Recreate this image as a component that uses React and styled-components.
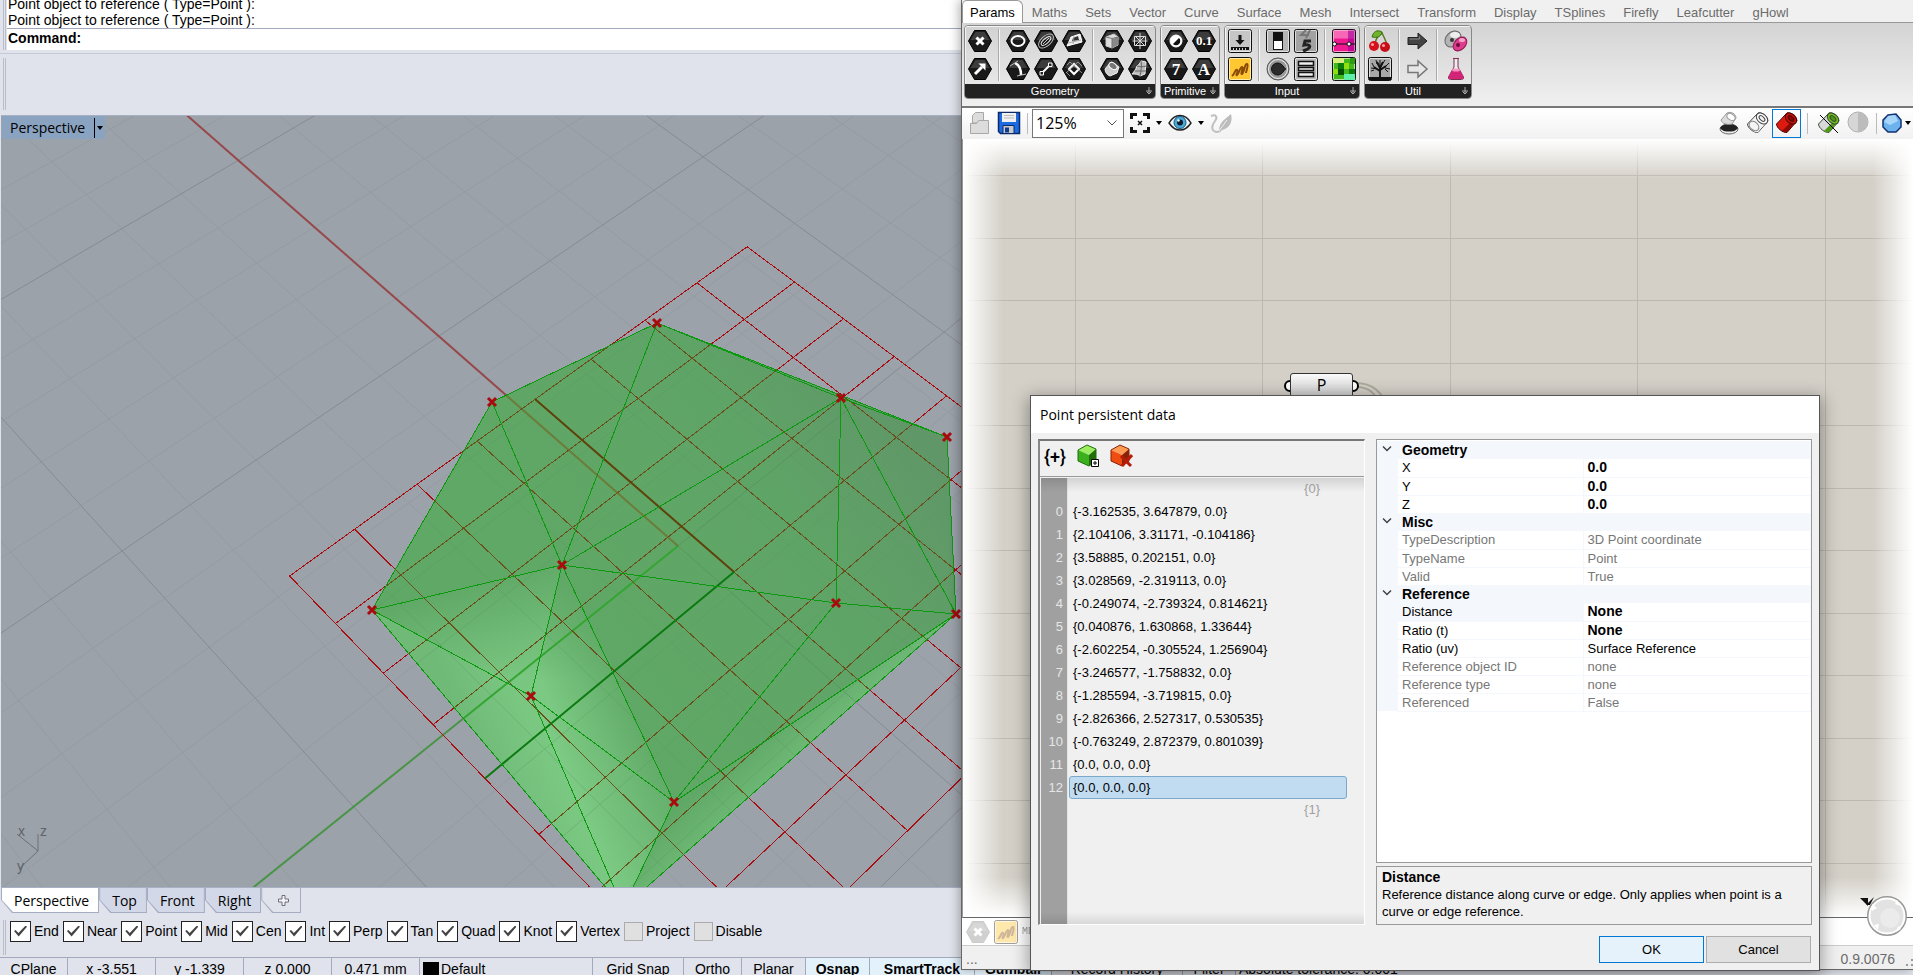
import React, { useState } from "react";
import styled, { createGlobalStyle, css } from "styled-components";

const SANS = `"Liberation Sans", Arial, sans-serif`;
const UI = `"Open Sans", "Noto Sans", sans-serif`;

/* ---------- data ---------- */

const VIEW_TABS = ["Perspective", "Top", "Front", "Right"];

const OSNAPS = [
  ["End", true],
  ["Near", true],
  ["Point", true],
  ["Mid", true],
  ["Cen", true],
  ["Int", true],
  ["Perp", true],
  ["Tan", true],
  ["Quad", true],
  ["Knot", true],
  ["Vertex", true],
  ["Project", false],
  ["Disable", false],
];

const GH_TABS = [
  "Params",
  "Maths",
  "Sets",
  "Vector",
  "Curve",
  "Surface",
  "Mesh",
  "Intersect",
  "Transform",
  "Display",
  "TSplines",
  "Firefly",
  "Leafcutter",
  "gHowl",
];

const POINTS = [
  "{-3.162535, 3.647879, 0.0}",
  "{2.104106, 3.31171, -0.104186}",
  "{3.58885, 0.202151, 0.0}",
  "{3.028569, -2.319113, 0.0}",
  "{-0.249074, -2.739324, 0.814621}",
  "{0.040876, 1.630868, 1.33644}",
  "{-2.602254, -0.305524, 1.256904}",
  "{-3.246577, -1.758832, 0.0}",
  "{-1.285594, -3.719815, 0.0}",
  "{-2.826366, 2.527317, 0.530535}",
  "{-0.763249, 2.872379, 0.801039}",
  "{0.0, 0.0, 0.0}",
  "{0.0, 0.0, 0.0}",
];

const PROPERTIES = [
  {
    title: "Geometry",
    rows: [
      { name: "X", value: "0.0", strong: true },
      { name: "Y", value: "0.0", strong: true },
      { name: "Z", value: "0.0", strong: true },
    ],
  },
  {
    title: "Misc",
    rows: [
      { name: "TypeDescription", value: "3D Point coordinate", muted: true },
      { name: "TypeName", value: "Point", muted: true },
      { name: "Valid", value: "True", muted: true },
    ],
  },
  {
    title: "Reference",
    rows: [
      { name: "Distance", value: "None", strong: true, selected: true },
      { name: "Ratio (t)", value: "None", strong: true },
      { name: "Ratio (uv)", value: "Surface Reference" },
      { name: "Reference object ID", value: "none", muted: true },
      { name: "Reference type", value: "none", muted: true },
      { name: "Referenced", value: "False", muted: true },
    ],
  },
];

/* ---------- viewport scene ---------- */

// ground plane: the two vanishing points and the step towards each
const VU = [3637, -1833, 0.01976];
const VV = [-2040, -1838, 0.0193];

const project = (origin, m, n) => {
  const w = 1 + m * VU[2] + n * VV[2];
  return [0, 1].map((i) =>
    ((origin[i] + m * VU[2] * VU[i] + n * VV[2] * VV[i]) / w).toFixed(1)
  );
};

const line = (origin, m1, n1, m2, n2) =>
  `M${project(origin, m1, n1)}L${project(origin, m2, n2)}`;

const range = (from, to) =>
  Array.from({ length: to - from + 1 }, (_, i) => from + i);

const WORLD = [678, 546];
const LOCAL = [734, 572];

const worldLines = (major) =>
  range(-19, 35)
    .filter((i) => (i % 5 === 0) === major)
    .map((i) => line(WORLD, i, -22, i, 40) + line(WORLD, -22, i, 40, i))
    .join("");

const localLines = range(-4, 4)
  .map((i) => line(LOCAL, i, -4, i, 4) + line(LOCAL, -4, i, 4, i))
  .join("");

const V = {
  a: [657, 323],
  b: [492, 402],
  c: [372, 610],
  d: [947, 437],
  e: [956, 614],
  f: [841, 398],
  g: [562, 565],
  h: [836, 603],
  i: [531, 696],
  j: [674, 802],
  k: [623, 908],
};

const EDGES =
  "ab bc ck ke ed da af fd bg ag fg cg gh he fh fe ci gi gj ij ik jk jh je";

const poly = (keys) => keys.split("").map((k) => V[k].join(",")).join(" ");

const SceneSvg = styled.svg`
  width: 100%;
  height: 100%;
`;

const SceneText = styled.text`
  font-family: ${SANS};
  font-size: 14px;
  fill: #5f636a;
`;

const Scene = () => (
  <SceneSvg viewBox="1 116 1912 771" preserveAspectRatio="xMinYMin slice">
    <defs>
      <linearGradient id="base" gradientUnits="userSpaceOnUse" x1="620" y1="700" x2="960" y2="480">
        <stop offset="0" stopColor="#60a866" />
        <stop offset="0.6" stopColor="#5fa467" />
        <stop offset="1" stopColor="#609668" />
      </linearGradient>
      <linearGradient id="litTop" gradientUnits="userSpaceOnUse" x1="460" y1="585" x2="495" y2="705">
        <stop offset="0" stopColor="#7cca84" stopOpacity="0" />
        <stop offset="0.85" stopColor="#7cca84" stopOpacity="0.9" />
      </linearGradient>
      <linearGradient id="litLeft" gradientUnits="userSpaceOnUse" x1="462" y1="722" x2="553" y2="682">
        <stop offset="0" stopColor="#74be7c" stopOpacity="0.8" />
        <stop offset="0.6" stopColor="#7cca84" stopOpacity="0.9" />
        <stop offset="1" stopColor="#7cca84" stopOpacity="1" />
      </linearGradient>
      <linearGradient id="litRight" gradientUnits="userSpaceOnUse" x1="553" y1="740" x2="655" y2="698">
        <stop offset="0" stopColor="#7cca84" stopOpacity="1" />
        <stop offset="1" stopColor="#7cca84" stopOpacity="0" />
      </linearGradient>
      <linearGradient id="litMid" gradientUnits="userSpaceOnUse" x1="545" y1="690" x2="622" y2="658">
        <stop offset="0" stopColor="#7cca84" stopOpacity="0.95" />
        <stop offset="1" stopColor="#7cca84" stopOpacity="0" />
      </linearGradient>
      <linearGradient id="midFade" gradientUnits="userSpaceOnUse" x1="0" y1="565" x2="0" y2="680">
        <stop offset="0" stopColor="#000" />
        <stop offset="1" stopColor="#fff" />
      </linearGradient>
      <mask id="midMask" maskUnits="userSpaceOnUse" x="300" y="500" width="500" height="500">
        <rect x="300" y="500" width="500" height="500" fill="url(#midFade)" />
      </mask>
      <linearGradient id="litEdge" gradientUnits="userSpaceOnUse" x1="720" y1="770" x2="756" y2="808">
        <stop offset="0" stopColor="#7cca84" stopOpacity="0" />
        <stop offset="1" stopColor="#7cca84" stopOpacity="0.6" />
      </linearGradient>
      <clipPath id="shape">
        <polygon points={poly("abcked")} />
      </clipPath>
    </defs>

    <rect x="0" y="100" width="1913" height="800" fill="#9ca2aa" />
    <path d={worldLines(false)} stroke="#949ba2" fill="none" />
    <path d={worldLines(true)} stroke="#878a93" fill="none" />
    <path d={line(WORLD, 0, 0, 0, 30)} stroke="#96494b" strokeWidth="2" />
    <path d={line(WORLD, 0, 0, -14, 0)} stroke="#4a9448" strokeWidth="2" />
    <path d={localLines} stroke="#a80d12" fill="none" shapeRendering="crispEdges" />

    <polygon points={poly("abcked")} fill="url(#base)" />
    <polygon points={poly("cgi")} fill="url(#litTop)" />
    <polygon points={poly("cik")} fill="url(#litLeft)" />
    <polygon points={poly("gji")} fill="url(#litMid)" mask="url(#midMask)" />
    <polygon points={poly("ijk")} fill="url(#litRight)" />
    <polygon points={poly("jek")} fill="url(#litEdge)" />

    <g clipPath="url(#shape)" fill="none">
      <path d={worldLines(false)} stroke="#5a9a62" strokeOpacity="0.4" />
      <path d={worldLines(true)} stroke="#56875c" strokeOpacity="0.5" />
      <path d={line(WORLD, 0, 0, 0, 30)} stroke="#6c7c3a" strokeWidth="2" />
      <path d={line(WORLD, 0, 0, -14, 0)} stroke="#35a532" strokeWidth="2" />
      <path d={localLines} stroke="#6a501c" shapeRendering="crispEdges" />
    </g>
    <path d={line(LOCAL, 0, 0, 0, 4)} stroke="#5e420a" strokeWidth="2" />
    <path d={line(LOCAL, 0, 0, -4, 0)} stroke="#0b7a10" strokeWidth="2" />
    <path
      d={EDGES.split(" ")
        .map(([p, q]) => `M${V[p]}L${V[q]}`)
        .join("")}
      stroke="#0c980f"
      fill="none"
      shapeRendering="crispEdges"
    />
    {"abcdefghij".split("").map((k) => (
      <path
        key={k}
        d={`M${V[k][0] - 4} ${V[k][1] - 4}l8 8m0 -8l-8 8`}
        stroke="#a80a0e"
        strokeWidth="3"
      />
    ))}

    <path d="M38 834V851L17 834M38 851L20 868" stroke="#6c7077" fill="none" />
    <SceneText x="18" y="836">x</SceneText>
    <SceneText x="40" y="836">z</SceneText>
    <SceneText x="17" y="871">y</SceneText>
  </SceneSvg>
);

/* ---------- icons ---------- */

const HexText = styled.text`
  font-family: "Liberation Serif", serif;
  font-size: ${(props) => props.$size}px;
  font-weight: bold;
  text-anchor: middle;
  fill: #fff;
  stroke: none;
`;

const Hex = ({ children }) => (
  <svg width="24" height="24" viewBox="0 0 24 24" fill="none" stroke="#fff">
    <path d="M.5 12 6.5 1.5h11l6 10.5-6 10.5h-11z" fill="#191919" stroke="#000" />
    <path d="m2.5 11 5-8h9l5 8z" fill="#3c3c3c" stroke="none" />
    {children}
  </svg>
);

const Tile = ({ fill = "#bdbdbd", children }) => (
  <svg width="24" height="24" viewBox="0 0 24 24" fill="none" stroke="#111">
    <rect x=".5" y=".5" width="23" height="23" rx="2" fill={fill} />
    <rect x="1.5" y="1.5" width="21" height="21" rx="1" stroke="#fff" strokeOpacity=".6" />
    {children}
  </svg>
);

const Free = ({ children }) => (
  <svg width="24" height="24" viewBox="0 0 24 24" fill="none">
    {children}
  </svg>
);

const icons = {
  Point: (
    <Hex>
      <path d="m8.5 8.5 7 7m0-7-7 7" strokeWidth="3" />
    </Hex>
  ),
  Vector: (
    <Hex>
      <path d="m7 17 7-7" strokeWidth="3" />
      <path d="M17.5 6.5v7l-7-7z" fill="#fff" stroke="none" />
    </Hex>
  ),
  Circle: (
    <Hex>
      <ellipse cx="12" cy="12" rx="6.5" ry="5" strokeWidth="2" />
    </Hex>
  ),
  Curve: (
    <Hex>
      <ellipse cx="12" cy="12" rx="9" ry="5" transform="rotate(-42 12 12)" stroke="#bbb" />
      <ellipse cx="12" cy="12" rx="6" ry="2.5" transform="rotate(-42 12 12)" stroke="#eee" />
      <path d="m9 15 6-6" stroke="#ccc" />
    </Hex>
  ),
  Plane: (
    <Hex>
      <path d="m5 17 4-9 9-3 2 8z" fill="#eee" />
      <path d="m10 12 1-3 5-2 1 4z" fill="#333" stroke="none" />
      <path d="m6 14 13-3M12 7l-1 8" stroke="#999" strokeWidth=".8" />
    </Hex>
  ),
  Arc: (
    <Hex>
      <path d="M9 6c4 2 6 6 6 12" strokeWidth="2.5" />
      <path d="m4 9 8-5m-1 15 9-2" stroke="#bbb" />
    </Hex>
  ),
  Line: (
    <Hex>
      <path d="m8 16 8-8" strokeWidth="2" />
      <path d="M6 14.5h3.5V18H6zM14.5 6H18v3.5h-3.5z" fill="#222" />
    </Hex>
  ),
  Rectangle: (
    <Hex>
      <path d="m12 7 5 5-5 5-5-5z" strokeWidth="2" />
      <path d="m5 8 3-3 12 11M4 16 16 5l4 4M8 19l-4-4" stroke="#aaa" strokeWidth=".8" />
    </Hex>
  ),
  Box: (
    <Hex>
      <path d="m6 8 8-3 4 3v8l-6 3-6-2z" fill="#ddd" stroke="#ccc" />
      <path d="m12 10 6-2v8l-6 3z" fill="#888" stroke="none" />
      <path d="m6 8 6 1.5L18 8m-6 1.5V19" stroke="#777" />
    </Hex>
  ),
  Mesh: (
    <Hex>
      <path d="M12 4v16M4.500 12h15M7 7l10 10M17 7 7 17M6.500 7.500h11v9h-11z" stroke="#ddd" />
    </Hex>
  ),
  Brep: (
    <Hex>
      <path d="m5 12 6-7 8 5-2 6-7 3c-3-1-5-4-5-7z" fill="#ccc" stroke="#eee" />
      <ellipse cx="13" cy="9" rx="4.5" ry="3" transform="rotate(35 13 9)" fill="#777" stroke="#fff" />
    </Hex>
  ),
  Surface: (
    <Hex>
      <path d="M9 9c2-1 3-3 4-5l5 1-1 12-5 2c-2-2-5-2-8-2 2-2 4-5 5-8z" fill="#bbb" stroke="#eee" />
      <path d="M9 9c3 1 6 1 9 0M7 14h11m-5-10c1 5 0 10-1 15" stroke="#666" />
    </Hex>
  ),
  Boolean: (
    <Hex>
      <circle cx="12" cy="12" r="6" fill="#fff" />
      <path d="M9 15a4.200 4.200 0 0 0 6-6z" fill="#111" stroke="none" />
    </Hex>
  ),
  Number: (
    <Hex>
      <HexText x="12" y="16" $size={13}>0.1</HexText>
    </Hex>
  ),
  Integer: (
    <Hex>
      <HexText x="12" y="18" $size={17}>7</HexText>
    </Hex>
  ),
  Text: (
    <Hex>
      <HexText x="12" y="18" $size={17}>A</HexText>
    </Hex>
  ),
  Gate: (
    <Tile fill="#c6c6c6">
      <path d="M12 6v6" strokeWidth="3" />
      <path d="M7.500 11h9L12 16zM3 18h18v3H3z" fill="#111" stroke="none" />
      <path d="M5.500 21v-2m3 2v-2m3 2v-2m3 2v-2m3 2v-2" stroke="#ccc" />
    </Tile>
  ),
  Panel: (
    <Tile fill="#ffc732">
      <path d="M4 19c3-2 3-7 5-6s-2 6 0 5 3-8 5-8-2 8 0 7 3-11 5-10-1 7-1 9" stroke="#8a4b05" strokeWidth="2" />
    </Tile>
  ),
  Slider: (
    <Tile fill="#b4b4b4">
      <rect x="7.5" y="3.5" width="9" height="17" fill="#fff" />
      <rect x="8" y="4" width="8" height="8" fill="#111" stroke="none" />
    </Tile>
  ),
  Knob: (
    <Free>
      <circle cx="12" cy="12" r="11" fill="#999" stroke="#555" />
      <circle cx="12" cy="12" r="9.5" stroke="#eee" />
      <path d="M20 12c-2 0-3 6-8.500 6a6 6 0 0 1 0-12c5.500 0 6.500 6 8.500 6z" fill="#2c2c2c" stroke="#111" />
    </Free>
  ),
  Scroller: (
    <Tile fill="#a2a2a2">
      <path d="m12 1-5 5h8m1-5-4 8" stroke="#777" strokeWidth="2" />
      <path d="M17 12h-6l-1 4c5-1 7 1 5 3s-4 2-6 3" stroke="#222" strokeWidth="3" />
    </Tile>
  ),
  List: (
    <Tile fill="#b9b9b9">
      <path d="M4.500 4.500h15v4h-15zM4.500 10.500h15v3h-15zM4.500 15.500h15v4h-15z" fill="#eee" strokeWidth="1.5" />
    </Tile>
  ),
  Gradient: (
    <Tile fill="#f01890">
      <path d="M1.500 1.500h21v8h-21z" fill="#ffb4dc" fillOpacity=".5" stroke="none" />
      <path d="M16 1.500h6.500v21H16z" fill="#a1009a" fillOpacity=".6" stroke="none" />
      <path d="M1 15h22" />
      <circle cx="2.5" cy="15" r="2" fill="#fff" />
      <circle cx="17" cy="15" r="2" fill="#fff" />
    </Tile>
  ),
  Image: (
    <Tile fill="#43b81c">
      <g stroke="none">
        <path d="M1 1h11v5H1z" fill="#d6ef7c" />
        <path d="M6 6h6v6H6zM17 12h6v6h-6z" fill="#0a7d0c" />
        <path d="M12 6h5v6h-5zM1 12h5v5H1z" fill="#90e010" />
        <path d="M6 12h6v6H6z" fill="#054e06" />
        <path d="M17 17h6v6h-6zM12 17h5v6h-5z" fill="#5df0a8" />
        <path d="M18 1h5v6h-5z" fill="#2f9c14" />
      </g>
    </Tile>
  ),
  Cherry: (
    <Free>
      <path d="M7 15C8 9 10 6 14 4c2 4 4 8 5 12" stroke="#5a7a20" strokeWidth="1.5" />
      <path d="M14 3C9 0 5 3 4 8c5 1 9 0 10-5z" fill="#6fb52c" stroke="#3c6d12" />
      <circle cx="6" cy="17" r="5" fill="#d5121b" />
      <circle cx="17" cy="18" r="5" fill="#c80f18" />
      <circle cx="4.5" cy="15.5" r="1.5" fill="#ff9d9d" />
      <circle cx="15.5" cy="16.5" r="1.5" fill="#ff9d9d" />
    </Free>
  ),
  Tree: (
    <Tile fill="#a8a8a8">
      <path d="M12 21V11m0 3L6 10m6 3 6-4m-6 2-3-6m3 6 3-6" strokeWidth="2" />
      <path d="m9 12-6-1m3-1L4 6m5 1L8 3m4 6V3m3 3 2-3m1 6 3-3m-4 5 5 1M6 13l-3 1m14-2 3 3" />
      <path d="M1 20h22v3H1z" fill="#111" stroke="none" />
    </Tile>
  ),
  Input: (
    <Free>
      <path d="M2 8.500h10V4l9 8-9 8v-4.500H2z" fill="#444" stroke="#222" />
      <path d="M3.500 10h10V7.500" stroke="#888" />
    </Free>
  ),
  Output: (
    <Free>
      <path d="M2 8.500h10V4l9 8-9 8v-4.500H2z" fill="#e6e6e6" stroke="#777" strokeWidth="1.5" />
    </Free>
  ),
  Clusters: (
    <Free>
      <ellipse cx="9" cy="10" rx="9" ry="7" transform="rotate(-45 9 10)" fill="#b4b4b4" stroke="#666" />
      <ellipse cx="11" cy="6" rx="5" ry="3" fill="#eee" />
      <circle cx="8" cy="11" r="2" fill="#333" />
      <ellipse cx="16" cy="15" rx="8" ry="5.5" transform="rotate(-45 16 15)" fill="#de3c8c" stroke="#8c1650" />
      <ellipse cx="18" cy="11" rx="3" ry="2" fill="#f7a3cc" />
      <circle cx="14" cy="16" r="2" fill="#6c0c3a" />
    </Free>
  ),
  Flask: (
    <Free>
      <path d="M9 1.500h6M10 2v8L4.500 20c-.5 2 1 2.500 2 2.500h11c1 0 2.500-.5 2-2.500L14 10V2" fill="#eee" stroke="#7c3052" />
      <path d="m8 13-3.500 7c0 2 1 2 2 2h11c1 0 2 0 2-2L16 13z" fill="#d42478" />
      <ellipse cx="12" cy="13" rx="4" ry="1.5" fill="#f694c2" />
    </Free>
  ),
};

const RIBBON = [
  {
    title: "Geometry",
    groups: [
      ["Point", "Vector"],
      ["Circle", "Arc", "Curve", "Line", "Plane", "Rectangle"],
      ["Box", "Brep", "Mesh", "Surface"],
    ],
  },
  { title: "Primitive", groups: [["Boolean", "Integer", "Number", "Text"]] },
  {
    title: "Input",
    groups: [
      ["Gate", "Panel"],
      ["Slider", "Knob", "Scroller", "List"],
      ["Gradient", "Image"],
    ],
  },
  {
    title: "Util",
    groups: [["Cherry", "Tree"], ["Input", "Output"], ["Clusters", "Flask"]],
  },
];

const Cylinder = ({ body, dark, rim, stroke = "#222" }) => (
  <g stroke={stroke}>
    <path d="M1.500 13 12 2c3-1.500 9.500 3 10 8L12 21.500C8 22 1.500 17 1.500 13z" fill={body} />
    <path d="M7 20c2 1 4 1.500 5 1l9.500-11L20 7z" fill={dark} stroke="none" />
    <ellipse cx="16" cy="7.5" rx="6.5" ry="4.5" transform="rotate(42 16 7.5)" fill={rim} />
    <ellipse cx="16" cy="7.5" rx="3.500" ry="2" transform="rotate(42 16 7.5)" fill={dark} />
  </g>
);

const OpenIcon = () => (
  <svg width="22" height="24" viewBox="0 0 22 24" fill="#dcdcdc" stroke="#a8a8a8">
    <path d="M3.500 12V4.500l3-3h8V12z" />
    <path d="M1.500 22.500v-10h6l2-3h10v13z" />
  </svg>
);

const SaveIcon = () => (
  <svg width="24" height="24" viewBox="0 0 24 24">
    <path d="M1.500 1.500h21v21h-19l-2-2z" fill="#1d6be0" stroke="#0b2a6c" strokeWidth="1.5" />
    <path d="M5 2h14v9H5z" fill="#f0f0f0" />
    <path d="M7 4.500h10M7 7h10" stroke="#bbb" />
    <path d="M6 14.500h11v8H6z" fill="#c9c9c9" stroke="#0b2a6c" />
    <path d="M8 16.500h4v5H8z" fill="#123c92" />
  </svg>
);

const ExtentsIcon = () => (
  <svg width="20" height="20" viewBox="0 0 20 20" fill="none" stroke="#111">
    <path d="M1.500 6V1.500H7M13 1.500h5.500V6M18.500 14v4.500H13M7 18.500H1.500V14" strokeWidth="3" />
    <path d="m8 8 4 4m0-4-4 4" strokeWidth="1.5" />
  </svg>
);

const EyeIcon = () => (
  <svg width="24" height="20" viewBox="0 0 24 20">
    <path d="M1 10C5 3 9 2.500 12 2.500S19 3 23 10c-4 6-8 7-11 7S5 16 1 10z" fill="#eef6fa" stroke="#222" strokeWidth="1.5" />
    <circle cx="12" cy="9.5" r="6" fill="#4ba9d8" stroke="#14567e" />
    <circle cx="12" cy="9.5" r="3" fill="#0c1c2c" />
    <circle cx="10.5" cy="7.5" r="1.2" fill="#fff" />
  </svg>
);

const PenIcon = () => (
  <svg width="24" height="24" viewBox="0 0 24 24" fill="none">
    <path d="M2 5c5-2 7 1 4 5s-4 8-1 10 5 1 7-1" stroke="#c0c0c0" strokeWidth="2" />
    <path d="M10 20c0-5 2-9 6-12l6-5c1 4 1 8-2 12-3 3-6 4-10 5z" fill="#bcbcbc" />
    <path d="m10 20 8-11" stroke="#eee" />
  </svg>
);

const Caret = () => (
  <CaretSvg width="6" height="4" viewBox="0 0 6 4">
    <path d="M0 0h6L3 4z" fill="#000" />
  </CaretSvg>
);

/* ---------- app ---------- */

const CommandArea = () => (
  <>
    <CommandPanel>
      <Grip />
      <CommandText>
        <History>
          <p>Point object to reference ( Type=Point ):</p>
          <p>Point object to reference ( Type=Point ):</p>
        </History>
        <Prompt>
          <label htmlFor="command">Command:</label>
          <PromptInput id="command" />
        </Prompt>
      </CommandText>
    </CommandPanel>
    <EmptyToolbar>
      <Grip />
    </EmptyToolbar>
  </>
);

const OsnapBar = () => {
  const [snaps, setSnaps] = useState(OSNAPS);
  const toggle = (index) =>
    setSnaps(snaps.map(([n, on], i) => [n, i === index ? !on : on]));

  return (
    <Osnaps>
      <Grip />
      {snaps.map(([name, on], i) => (
        <Snap key={name}>
          <SnapBox type="checkbox" checked={on} onChange={() => toggle(i)} />
          {name}
        </Snap>
      ))}
    </Osnaps>
  );
};

const StatusBar = () => (
  <Status>
    <StatusCell $w={68}>CPlane</StatusCell>
    <StatusCell $w={88}>x -3.551</StatusCell>
    <StatusCell $w={88}>y -1.339</StatusCell>
    <StatusCell $w={88}>z 0.000</StatusCell>
    <StatusCell $w={88}>0.471 mm</StatusCell>
    <StatusCell $w={173} $left>
      <Swatch />
      Default
    </StatusCell>
    <StatusCell $w={91}>Grid Snap</StatusCell>
    <StatusCell $w={58}>Ortho</StatusCell>
    <StatusCell $w={64}>Planar</StatusCell>
    <StatusCell $w={64} $on>Osnap</StatusCell>
    <StatusCell $w={105} $on>SmartTrack</StatusCell>
    <StatusCell $w={77} $on>Gumball</StatusCell>
    <StatusCell $w={131}>Record History</StatusCell>
    <StatusCell $w={53}>Filter</StatusCell>
    <StatusCell $w={678} $left>Absolute tolerance: 0.001</StatusCell>
  </Status>
);

const Rhino = () => (
  <RhinoWindow>
    <CommandArea />
    <Viewport>
      <Scene />
      <ViewLabel type="button">
        <span>Perspective</span>
        <i />
        <Caret />
      </ViewLabel>
    </Viewport>
    <ViewTabs>
      {VIEW_TABS.map((tab, i) => (
        <ViewTab type="button" key={tab} $active={i === 0}>
          {tab}
        </ViewTab>
      ))}
      <ViewTab type="button" $plain aria-label="New viewport">
        <svg width="11" height="11" viewBox="0 0 11 11" fill="#f4f4f8" stroke="#6c6f78">
          <path d="M4 .5h3V4h3.500v3H7v3.500H4V7H.5V4H4z" />
        </svg>
      </ViewTab>
    </ViewTabs>
    <OsnapBar />
    <StatusBar />
  </RhinoWindow>
);

const Ribbon = () => (
  <RibbonBar>
    {RIBBON.map((box) => (
      <RibbonBox key={box.title}>
        <RibbonGroups>
          {box.groups.map((group) => (
            <RibbonGroup key={group[0]}>
              {group.map((name) => (
                <RibbonButton type="button" key={name} aria-label={name}>
                  {icons[name]}
                </RibbonButton>
              ))}
            </RibbonGroup>
          ))}
        </RibbonGroups>
        <RibbonTitle>
          <span>{box.title}</span>
          <svg width="8" height="8" viewBox="0 0 8 8" stroke="#aaa" fill="none">
            <path d="M4 0v7M1 4h6M2 5l2 2 2-2" />
          </svg>
        </RibbonTitle>
      </RibbonBox>
    ))}
  </RibbonBar>
);

const Toolbar = () => (
  <ToolBar>
    <ToolButton type="button" aria-label="Open"><OpenIcon /></ToolButton>
    <ToolButton type="button" aria-label="Save"><SaveIcon /></ToolButton>
    <ToolRule />
    <ZoomBox>
      <ZoomSelect aria-label="Zoom" defaultValue="125%">
        <option>100%</option>
        <option>125%</option>
        <option>150%</option>
      </ZoomSelect>
      <svg width="10" height="6" viewBox="0 0 10 6" fill="none" stroke="#555">
        <path d="m.5.5 4.500 4.500L9.500.5" />
      </svg>
    </ZoomBox>
    <ToolButton type="button" aria-label="Zoom extents"><ExtentsIcon /></ToolButton>
    <Caret />
    <ToolButton type="button" aria-label="Named views" $w={32}><EyeIcon /></ToolButton>
    <Caret />
    <ToolButton type="button" aria-label="Sketch"><PenIcon /></ToolButton>
    <Spacer />
    <ToolButton type="button" aria-label="No preview">
      <Free>
        <ellipse cx="12" cy="18" rx="9" ry="5" fill="#eee" stroke="#666" />
        <path d="M3 17c2-3 5-4 9-4s7 1 9 4c-2 3-5 3.500-9 3.500s-7-.5-9-3.500z" fill="#222" />
        <path d="m4 9 6-7c4-2 9 1 9 5l-4 6c-4 1-10 0-11-4z" fill="#dcdcdc" stroke="#999" />
        <ellipse cx="14" cy="6" rx="4.5" ry="3" transform="rotate(35 14 6)" fill="#fff" stroke="#999" />
      </Free>
    </ToolButton>
    <ToolButton type="button" aria-label="Wireframe preview">
      <Free>
        <Cylinder body="#f4f4f4" dark="#f4f4f4" rim="#fff" stroke="#444" />
        <ellipse cx="8" cy="15" rx="5.5" ry="4" transform="rotate(42 8 15)" stroke="#888" />
      </Free>
    </ToolButton>
    <ToolButton type="button" aria-label="Shaded preview" $active>
      <Free>
        <Cylinder body="#dd1a10" dark="#8e0904" rim="#c8150c" stroke="#4c0400" />
      </Free>
    </ToolButton>
    <ToolRule $far />
    <ToolButton type="button" aria-label="Preview selected">
      <Free>
        <Cylinder body="#d8d8d8" dark="#4c9a10" rim="#6fbe20" stroke="#3a4a30" />
        <path d="m3 4 18 18" stroke="#000" />
      </Free>
    </ToolButton>
    <ToolButton type="button" aria-label="Document preview">
      <Free>
        <circle cx="12" cy="11" r="10" fill="#d6d6d6" stroke="#b0b0b0" />
        <path d="M12 1a10 10 0 0 1 0 20z" fill="#bcbcbc" />
      </Free>
    </ToolButton>
    <ToolRule />
    <ToolButton type="button" aria-label="Mesh quality" $w={22}>
      <svg width="20" height="20" viewBox="0 0 20 20">
        <path d="m6 2 8-1 5 6v7l-5 5H6l-5-5V7z" fill="#6cb2ee" stroke="#15306e" strokeWidth="1.5" />
        <path d="m6 3 7-1 3 6-8 4-6-3z" fill="#a8d6fa" />
      </svg>
    </ToolButton>
    <Caret />
  </ToolBar>
);

const Grasshopper = () => (
  <GhWindow>
    <GhTabs>
      {GH_TABS.map((tab, i) => (
        <GhTab type="button" key={tab} $active={i === 0}>
          {tab}
        </GhTab>
      ))}
    </GhTabs>
    <Ribbon />
    <Toolbar />
    <Canvas>
      <ParamNode>
        <Wires width="60" height="60" viewBox="0 0 60 60" fill="none">
          <path d="M0 6C16 6 26 14 34 34M0 10c14 0 20 6 26 24" stroke="#a9aa9c" strokeWidth="2" />
        </Wires>
        <NodeGrip $side="left" />
        <NodeGrip $side="right" />
        <NodeBody>P</NodeBody>
      </ParamNode>
      <CanvasFade />
      <Compass width="50" height="44" viewBox="0 0 50 44">
        <path d="M0 3h8v8zM6 10l8-8-4 8z" fill="#111" />
        <circle cx="27" cy="21" r="19" fill="#ededed" stroke="#9a9a9a" strokeWidth="2" />
        <circle cx="27" cy="21" r="17.5" fill="#e2e2e2" stroke="#fff" strokeWidth="2" />
        <circle cx="30" cy="23" r="10" fill="#ebebeb" />
        <path d="m12 9 5 4-5 3zM37 5l4 6-6-2zM14 30l4 5 1-6zM38 31l-2 6 5-3z" fill="#fff" />
      </Compass>
    </Canvas>
    <RecentBar>
      {icons.Point}
      {icons.Panel}
      <span>MD</span>
    </RecentBar>
    <GhStatus>
      <span>...</span>
      <span>0.9.0076</span>
      <ResizeGrip width="8" height="8" viewBox="0 0 8 8" fill="#999">
        <path d="M6 0h2v2H6zM6 5h2v2H6zM1 5h2v2H1z" />
      </ResizeGrip>
    </GhStatus>
  </GhWindow>
);

const Cube = ({ top, left, right, children }) => (
  <svg width="24" height="24" viewBox="0 0 24 24">
    <path d="m2 6 9-5 9 4-7 6z" fill={top} />
    <path d="m2 6 11 5v11L2 17z" fill={left} />
    <path d="m13 11 7-6v12l-7 5z" fill={right} />
    <path d="m2 6 9-5 9 4v12l-7 5-11-5z" fill="none" stroke={right} />
    {children}
  </svg>
);

const PointList = () => {
  const [selected, setSelected] = useState(12);

  return (
    <ListPanel>
      <ListTools>
        <ListTool type="button" aria-label="Add branch">{"{+}"}</ListTool>
        <ListTool type="button" aria-label="Add item">
          <Cube top="#9cec62" left="#3ab01c" right="#1f6e0a">
            <path d="M15.500 15.500h7v7h-7zM19 17v4m-2-2h4" fill="#fff" stroke="#000" />
          </Cube>
        </ListTool>
        <ListTool type="button" aria-label="Remove item">
          <Cube top="#ff9a55" left="#ef4c10" right="#8a2004">
            <path d="m12 12 10 10m1-11-10 11" stroke="#b41c08" strokeWidth="3" />
          </Cube>
        </ListTool>
      </ListTools>
      <ListBody>
        <BranchRow>{"{0}"}</BranchRow>
        {POINTS.map((text, i) => (
          <PointRow key={i}>
            <span>{i}</span>
            <PointItem
              type="button"
              $selected={i === selected}
              onClick={() => setSelected(i)}
            >
              {text}
            </PointItem>
          </PointRow>
        ))}
        <BranchRow>{"{1}"}</BranchRow>
      </ListBody>
    </ListPanel>
  );
};

const PropertyGrid = () => (
  <GridFrame>
    <Grid>
      <colgroup>
        <col width="21" />
        <col width="185" />
        <col />
      </colgroup>
      {PROPERTIES.map((section) => (
        <tbody key={section.title}>
          <tr>
            <Margin>
              <svg width="10" height="6" viewBox="0 0 10 6" fill="none" stroke="#444">
                <path d="m1 .5 4 4 4-4" strokeWidth="1.5" />
              </svg>
            </Margin>
            <Category colSpan="2" scope="rowgroup">
              {section.title}
            </Category>
          </tr>
          {section.rows.map((row) => (
            <tr key={row.name}>
              <Margin />
              <Cell $muted={row.muted} $selected={row.selected}>
                {row.name}
              </Cell>
              <Cell $muted={row.muted} $strong={row.strong}>
                {row.value}
              </Cell>
            </tr>
          ))}
        </tbody>
      ))}
    </Grid>
  </GridFrame>
);

const PointDialog = () => (
  <Dialog role="dialog" aria-labelledby="dialog-title">
    <DialogTitle id="dialog-title">Point persistent data</DialogTitle>
    <DialogBody>
      <PointList />
      <RightColumn>
        <PropertyGrid />
        <Description>
          <strong>Distance</strong>
          <p>
            Reference distance along curve or edge. Only applies when point is a
            curve or edge reference.
          </p>
        </Description>
      </RightColumn>
    </DialogBody>
    <DialogButtons>
      <DialogButton type="button" $primary>OK</DialogButton>
      <DialogButton type="button">Cancel</DialogButton>
    </DialogButtons>
  </Dialog>
);

const App = () => (
  <Desktop>
    <GlobalStyle />
    <Rhino />
    <Grasshopper />
    <PointDialog />
  </Desktop>
);

/* ---------- styles ---------- */

const GlobalStyle = createGlobalStyle`
  * {
    box-sizing: border-box;
  }

  body {
    margin: 0;
    overflow: hidden;
    font-family: ${SANS};
    font-size: 14px;
    color: #000;
  }

  p {
    margin: 0;
  }

  button {
    margin: 0;
    padding: 0;
    border: 0;
    background: none;
    font: inherit;
    color: inherit;
  }

  svg {
    display: block;
    flex: none;
  }
`;

const Desktop = styled.main`
  position: relative;
  height: 100vh;
  overflow: hidden;
`;

const RhinoWindow = styled.section`
  display: flex;
  flex-direction: column;
  height: 100%;
  background: #e0e3eb;
`;

const Grip = styled.div`
  width: 3px;
  border: solid #b9bdc9;
  border-width: 0 1px;
  flex: none;
`;

const CommandPanel = styled.div`
  display: flex;
  gap: 1px;
  height: 54px;
  padding: 0 0 3px 3px;
  border-bottom: 1px solid #c5cad6;
`;

const CommandText = styled.div`
  flex: 1;
  background: #fff;
`;

const History = styled.div`
  display: flex;
  flex-direction: column;
  justify-content: flex-end;
  height: 29px;
  padding-left: 1px;
  overflow: hidden;
  border-bottom: 1px solid #a3a9bc;
  line-height: 16px;
`;

const Prompt = styled.div`
  display: flex;
  padding-left: 1px;
  font-weight: bold;
  line-height: 18px;
`;

const PromptInput = styled.input`
  flex: 1;
  border: 0;
  padding: 0 4px;
  font: inherit;
  outline: none;
`;

const EmptyToolbar = styled.div`
  display: flex;
  height: 61px;
  padding: 4px 0 5px 3px;
`;

const Viewport = styled.div`
  position: relative;
  flex: 1;
  min-height: 0;
  margin-left: 1px;
  border: solid #a7b0c2;
  border-width: 1px 0;
  overflow: hidden;
`;

const ViewLabel = styled.button`
  position: absolute;
  left: 1px;
  top: 0;
  display: flex;
  align-items: center;
  height: 23px;
  padding: 0 0 0 8px;
  background: #8aa3c0;
  font: 14px/20px ${UI};

  i {
    width: 1px;
    height: 20px;
    margin: 0 0 0 9px;
    background: #000;
  }
`;

const ViewTabs = styled.nav`
  display: flex;
  height: 25px;
  padding-left: 1px;
`;

const ViewTab = styled.button`
  position: relative;
  isolation: isolate;
  padding: ${(props) => (props.$plain ? "0 12px 0 17px" : "0 10px 0 13px")};
  font: 14px ${UI};
  background: #a6acc2;
  clip-path: polygon(0 0, 100% 0, 100% 100%, 11px 100%, 0 12px);

  &::before {
    content: "";
    position: absolute;
    inset: 0 1px 1px 1px;
    z-index: -1;
    background: ${(props) =>
      props.$active ? "#fff" : props.$plain ? "#e0e3eb" : "#d2d8e8"};
    clip-path: polygon(0 0, 100% 0, 100% 100%, 11px 100%, 0 12px);
  }
`;

const Osnaps = styled.div`
  display: flex;
  gap: 4px;
  height: 44px;
  padding: 7px 0 2px 3px;
`;

const Snap = styled.label`
  display: flex;
  align-items: center;
  gap: 3px;
  height: 22px;
`;

const SnapBox = styled.input`
  appearance: none;
  position: relative;
  width: 21px;
  height: 21px;
  margin: 0;
  background: #fff;
  border: 1px solid #222;

  &:not(:checked) {
    width: 19px;
    height: 19px;
    background: #e0e0e0;
    border-color: #ababab;
  }

  &:checked::after {
    content: "";
    position: absolute;
    inset: 4px 3px;
    background: #444;
    clip-path: polygon(0 50%, 12% 40%, 34% 68%, 90% 0, 100% 12%, 36% 100%);
  }
`;

const Status = styled.footer`
  display: flex;
  height: 18px;
  flex: none;
  border-top: 1px solid #a3a9bc;
  overflow: hidden;
  line-height: 23px;
`;

const StatusCell = styled.div`
  display: flex;
  flex: none;
  justify-content: ${(props) => (props.$left ? "flex-start" : "center")};
  width: ${(props) => props.$w}px;
  padding-left: ${(props) => (props.$left ? "3px" : 0)};
  border-right: 1px solid #a3a9bc;
  white-space: nowrap;
  ${(props) =>
    props.$on &&
    css`
      background: #e3f1fb;
      font-weight: bold;
    `}
`;

const Swatch = styled.i`
  width: 16px;
  height: 16px;
  margin: 4px 2px 0 0;
  background: #000;
`;

const GhWindow = styled.section`
  position: absolute;
  left: 961px;
  right: 0;
  top: 0;
  bottom: 5px;
  display: flex;
  flex-direction: column;
  background: #f0f0f0;
  border-left: 1px solid #666;
  border-bottom: 1px solid #666;
  box-shadow: -2px 0 10px rgba(0, 0, 0, 0.3);
`;

const GhTabs = styled.nav`
  display: flex;
  height: 23px;
  flex: none;
  font-size: 13px;
  color: #6b6b6b;
  box-shadow: inset 0 -1px #999;
`;

const GhTab = styled.button`
  padding: 2px 9px 0;
  ${(props) =>
    props.$active &&
    css`
      padding: 0 7px;
      background: #fff;
      color: #000;
      border: 1px solid #999;
      border-bottom: 0;
      border-radius: 5px 6px 0 0;
    `}
`;

const RibbonBar = styled.div`
  display: flex;
  align-items: flex-start;
  gap: 4px;
  height: 85px;
  flex: none;
  padding: 2px;
  background: linear-gradient(#d4d4d4, #f0f0f0);
  border-bottom: 2px solid #777;
`;

const RibbonBox = styled.div`
  border: 1px solid #888;
  border-radius: 4px;
  overflow: hidden;
  background: linear-gradient(#d2d2d2, #ececec);
`;

const RibbonGroups = styled.div`
  display: flex;
  gap: 10px;
  padding: 1px;
  box-shadow: inset 1px 1px #f4f4f4;
`;

const RibbonGroup = styled.div`
  position: relative;
  display: grid;
  grid-template-rows: 28px 28px;
  grid-auto-flow: column;
  grid-auto-columns: 28px;

  & + &::before {
    content: "";
    position: absolute;
    left: -6px;
    top: 2px;
    bottom: 2px;
    width: 2px;
    background: linear-gradient(90deg, #aaa 50%, #f6f6f6 50%);
  }
`;

const RibbonButton = styled.button`
  display: flex;
  align-items: center;
  justify-content: center;
`;

const RibbonTitle = styled.div`
  display: flex;
  align-items: center;
  height: 14px;
  padding-right: 2px;
  background: #222;
  color: #fff;
  font-size: 11px;
  line-height: 13px;

  span {
    flex: 1;
    text-align: center;
  }
`;

const ToolBar = styled.div`
  display: flex;
  align-items: center;
  height: 31px;
  flex: none;
  padding: 0 0 1px 3px;
  background: linear-gradient(#fff, #f1f1f1);
`;

const ToolButton = styled.button`
  display: flex;
  align-items: center;
  justify-content: center;
  width: ${(props) => props.$w || 29}px;
  height: 29px;
  flex: none;
  ${(props) =>
    props.$active &&
    css`
      border: 1px solid #0078d7;
    `}
`;

const CaretSvg = styled.svg`
  margin: 0 2px;
`;

const ToolRule = styled.i`
  width: 1px;
  height: 21px;
  margin: 0 ${(props) => (props.$far ? 6 : 4)}px;
  background: #bbb;
`;

const ZoomBox = styled.div`
  display: flex;
  align-items: center;
  width: 92px;
  height: 29px;
  padding-right: 6px;
  margin-right: 1px;
  background: #fff;
  border: 1px solid #777;
`;

const ZoomSelect = styled.select`
  appearance: none;
  flex: 1;
  min-width: 0;
  border: 0;
  padding: 0 3px;
  background: none;
  font: 16px ${UI};
  color: #000;
`;

const Spacer = styled.div`
  flex: 1;
`;

const Canvas = styled.div`
  position: relative;
  flex: 1;
  min-height: 0;
  background-color: #d4d0c8;
  background-image: linear-gradient(90deg, #bdb9b0 1px, transparent 1px),
    linear-gradient(90deg, #bdb9b0 1px, transparent 1px),
    linear-gradient(#bdb9b0 1px, transparent 1px),
    linear-gradient(#bdb9b0 1px, transparent 1px);
  background-size: 375px 100%, 375px 100%, 100% 125px, 100% 125px;
  background-position: 112px 0, 299px 0, 0 36px, 0 99px;
  border-left: 1px solid #999;
  border-bottom: 1px solid #666;
`;

const CanvasFade = styled.div`
  position: absolute;
  inset: 0;
  background: linear-gradient(90deg, #fff, rgba(255, 255, 255, 0) 40px),
    linear-gradient(270deg, #fff, rgba(255, 255, 255, 0) 40px),
    linear-gradient(#fff, rgba(255, 255, 255, 0) 40px),
    linear-gradient(0deg, #fff, rgba(255, 255, 255, 0) 40px);
`;

const ParamNode = styled.div`
  position: absolute;
  left: 327px;
  top: 234px;
  width: 63px;
  height: 27px;
`;

const NodeBody = styled.div`
  position: relative;
  height: 27px;
  border: 1px solid #333;
  border-radius: 3px;
  background: linear-gradient(#fafafa, #c4c4c4);
  font: 16px/22px ${UI};
  text-align: center;
`;

const NodeGrip = styled.i`
  position: absolute;
  ${(props) => props.$side}: -6px;
  top: 7px;
  width: 12px;
  height: 12px;
  border: 2px solid #000;
  border-radius: 50%;
  background: #fff;
`;

const Wires = styled.svg`
  position: absolute;
  left: 66px;
  top: 4px;
`;

const Compass = styled.svg`
  position: absolute;
  right: 3px;
  bottom: -22px;
  z-index: 1;
`;

const RecentBar = styled.div`
  display: flex;
  align-items: center;
  gap: 4px;
  height: 28px;
  flex: none;
  padding-left: 4px;
  background: #fff;
  border-bottom: 1px solid #ccc;
  font: 10px "Liberation Mono", monospace;

  & > * {
    opacity: 0.4;
  }

  & > :first-child {
    opacity: 0.2;
  }
`;

const GhStatus = styled.div`
  display: flex;
  justify-content: space-between;
  height: 23px;
  flex: none;
  padding: 0 18px 0 4px;
  line-height: 26px;
  color: #6b6b6b;
`;

const ResizeGrip = styled.svg`
  position: absolute;
  right: 0;
  bottom: 2px;
`;

const Dialog = styled.section`
  position: absolute;
  left: 1030px;
  top: 395px;
  width: 790px;
  display: flex;
  flex-direction: column;
  background: #f0f0f0;
  border: 1px solid #555;
  box-shadow: 0 4px 16px 2px rgba(0, 0, 0, 0.35);
  font-size: 13px;
`;

const DialogTitle = styled.h1`
  margin: 0;
  height: 37px;
  padding-left: 9px;
  background: #fff;
  font: 14px/37px ${UI};
`;

const DialogBody = styled.div`
  display: grid;
  grid-template-columns: 327px 1fr;
  gap: 11px;
  padding: 6px 7px 0;
`;

const ListPanel = styled.div`
  display: flex;
  flex-direction: column;
  height: 486px;
  border: 1px solid #fff;
  border-top: 2px solid #777;
  border-left: 2px solid #888;
`;

const ListTools = styled.div`
  display: flex;
  gap: 9px;
  height: 36px;
  padding: 1px 3px 0;
  border-bottom: 1px solid #999;
`;

const ListTool = styled.button`
  display: flex;
  align-items: center;
  justify-content: center;
  width: 24px;
  height: 28px;
  font: 500 18px Roboto, sans-serif;
`;

const ListBody = styled.div`
  display: flex;
  flex-direction: column;
  flex: 1;
  margin: 1px 0 0 1px;
  background: linear-gradient(rgba(0, 0, 0, 0.12), transparent 14px),
    linear-gradient(0deg, rgba(0, 0, 0, 0.1), transparent 12px),
    linear-gradient(90deg, #a0a0a0 26px, #d8d8d8 26px, #f0f0f0 27px);
`;

const BranchRow = styled.div`
  height: 22px;
  padding-right: 44px;
  line-height: 21px;
  text-align: right;
  color: #a0a0a0;
`;

const PointRow = styled.div`
  display: grid;
  grid-template-columns: 22px 278px;
  gap: 6px;
  line-height: 23px;

  span {
    text-align: right;
    color: #e6e6e6;
  }
`;

const PointItem = styled.button`
  height: 23px;
  padding: 0 3px;
  border: 1px solid transparent;
  border-radius: 3px;
  text-align: left;
  line-height: 21px;
  ${(props) =>
    props.$selected &&
    css`
      background: #c1dbf0;
      border-color: #7aa9c9;
    `}
`;

const RightColumn = styled.div`
  display: flex;
  flex-direction: column;
  gap: 3px;
`;

const GridFrame = styled.div`
  flex: 1;
  padding-top: 1px;
  background: #fff;
  border: 1px solid #999;
`;

const Grid = styled.table`
  width: 100%;
  table-layout: fixed;
  border-collapse: collapse;
`;

const Margin = styled.td`
  height: 18px;
  padding: 0 0 2px 5px;
  background: #f4f7fc;
`;

const Category = styled.th`
  padding: 0 4px;
  background: #f4f7fc;
  font-size: 14px;
  line-height: 17px;
  text-align: left;
`;

const Cell = styled.td`
  height: 18px;
  padding: 0 4px;
  border: solid #f4f7fc;
  border-width: 0 1px 1px 0;
  line-height: 17px;
  color: ${(props) => (props.$muted ? "#777" : "#000")};
  ${(props) =>
    props.$strong &&
    css`
      font-size: 14px;
      font-weight: bold;
    `}
  ${(props) =>
    props.$selected &&
    css`
      background: #f4f7fc;
    `}
`;

const Description = styled.div`
  height: 59px;
  padding: 2px 5px;
  border: 1px solid #999;
  line-height: 17px;

  strong {
    display: block;
    font-size: 14px;
  }
`;

const DialogButtons = styled.div`
  display: flex;
  justify-content: flex-end;
  gap: 2px;
  padding: 11px 8px 7px;
`;

const DialogButton = styled.button`
  width: 105px;
  height: 27px;
  background: ${(props) => (props.$primary ? "#e5f1fb" : "#e1e1e1")};
  border: 1px solid ${(props) => (props.$primary ? "#0078d7" : "#adadad")};
`;

export default App;
